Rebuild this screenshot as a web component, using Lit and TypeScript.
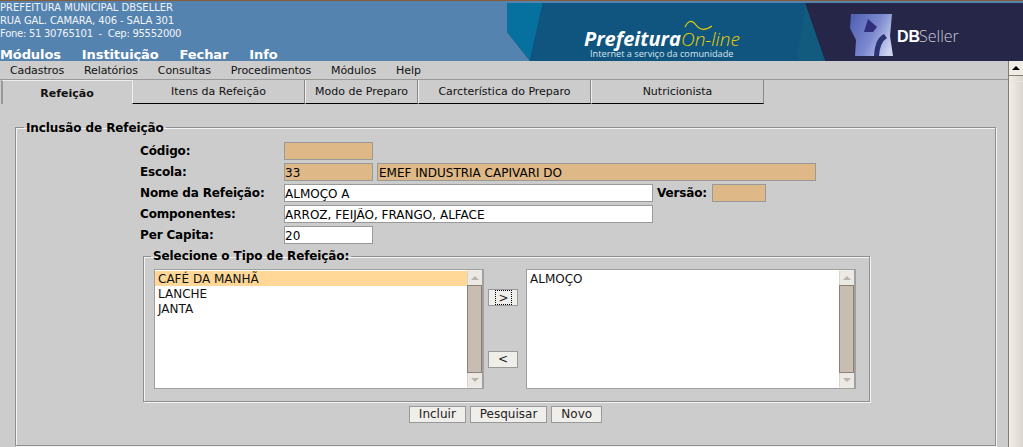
import { LitElement, css, html, svg } from 'lit'
import { customElement } from 'lit/decorators.js'

const topMenu = ['Módulos', 'Instituição', 'Fechar', 'Info']
const subMenu = ['Cadastros', 'Relatórios', 'Consultas', 'Procedimentos', 'Módulos', 'Help']
const tabs = [
  { label: 'Itens da Refeição', width: 173 },
  { label: 'Modo de Preparo', width: 113 },
  { label: 'Carcterística do Preparo', width: 173 },
  { label: 'Nutricionista', width: 173 },
]

const banner = svg`
  <svg class="banner" width="516" height="61" viewBox="507 0 516 61">
    <defs>
      <linearGradient id="cube" x1="0" y1="0.2" x2="1" y2="0.7">
        <stop offset="0" stop-color="#5362b4" />
        <stop offset="0.55" stop-color="#7d8ad0" />
        <stop offset="1" stop-color="#ccd4f0" />
      </linearGradient>
    </defs>
    <rect x="507" y="0" width="329" height="3" fill="#5583b0" />
    <rect x="507" y="3" width="516" height="58" fill="#252648" />
    <polygon points="507,3 543,3 530,61 507,32" fill="#06709f" />
    <polygon points="543,3 805,3 825,61 530,61" fill="#10557f" />
    <polygon points="805,3 825,61 797,61" fill="#125b7e" />
    <path d="M507 32 L530 61 L507 61Z" fill="#5583b0" />
    <path d="M851 14 L892 14 L890 36 L893 56 L855 56 L856 40 L850 28Z" fill="url(#cube)" />
    <path d="M864 32 L868 19 L877 27 L873 32Z" fill="#2e2f78" />
    <path d="M874 56 Q875 38 884 34 L887 38 Q880 42 879 56Z" fill="#2c3372" />
    <text x="584" y="46" class="pref">Prefeitura</text>
    <text x="681" y="46" class="online">On-line</text>
    <path d="M685 27 Q690 17 696 25 T712 26" fill="none" stroke="#e8d000" stroke-width="1.2" />
    <text x="590" y="57" class="tag">Internet a serviço da comunidade</text>
    <text x="897" y="42" class="db">DB</text>
    <text x="919" y="42" class="seller">Seller</text>
  </svg>
`

const arrow = (up: boolean) => html`<i class="tri ${up ? 'up' : 'down'}"></i>`

@customElement('app-root')
export class AppRoot extends LitElement {
  private list(items: string[], selected: number) {
    return html`
      <div class="list">
        <div class="options">
          ${items.map((t, i) => html`<div class="option ${i === selected ? 'sel' : ''}">${t}</div>`)}
        </div>
        <div class="sbar">
          <div class="sbtn">${arrow(true)}</div>
          <div class="sthumb"></div>
          <div class="sbtn">${arrow(false)}</div>
        </div>
      </div>
    `
  }

  protected render() {
    return html`
      <header class="head">
        <div class="brand">
          <div class="addr">
            <div>PREFEITURA MUNICIPAL DBSELLER</div>
            <div class="tight">RUA GAL. CAMARA, 406 - SALA 301</div>
            <div class="tighter">Fone: 51 30765101 &nbsp;-&nbsp; Cep: 95552000</div>
          </div>
          <nav class="top">${topMenu.map((m) => html`<span>${m}</span>`)}</nav>
        </div>
        ${banner}
      </header>
      <div class="page">
        <main class="main">
          <nav class="menu">${subMenu.map((m) => html`<span>${m}</span>`)}</nav>
          <div class="tabs">
            <div class="tab active">Refeição</div>
            ${tabs.map((t) => html`<div class="tab" style="width:${t.width}px">${t.label}</div>`)}
          </div>
          <fieldset class="outer">
            <legend>Inclusão de Refeição</legend>
            <div class="form">
              <label>Código:</label>
              <div class="row"><input class="ro short" readonly /></div>
              <label>Escola:</label>
              <div class="row">
                <input class="ro short" readonly value="33" />
                <input class="ro desc" readonly value="EMEF INDUSTRIA CAPIVARI DO" />
              </div>
              <label>Nome da Refeição:</label>
              <div class="row">
                <input class="wide" value="ALMOÇO A" />
                <label class="versao">Versão:</label>
                <input class="ro ver" readonly />
              </div>
              <label>Componentes:</label>
              <div class="row"><input class="wide" value="ARROZ, FEIJÃO, FRANGO, ALFACE" /></div>
              <label>Per Capita:</label>
              <div class="row"><input class="short" value="20" /></div>
            </div>
            <fieldset class="inner">
              <legend>Selecione o Tipo de Refeição:</legend>
              <div class="pick">
                ${this.list(['CAFÉ DA MANHÃ', 'LANCHE', 'JANTA'], 0)}
                <div class="moves">
                  <button class="move"><span class="focus">&gt;</span></button>
                  <button class="move">&lt;</button>
                </div>
                ${this.list(['ALMOÇO'], -1)}
              </div>
            </fieldset>
            <div class="actions">
              <button>Incluir</button>
              <button>Pesquisar</button>
              <button>Novo</button>
            </div>
          </fieldset>
        </main>
        <aside class="pagebar">
          <div class="pagebtn">${arrow(true)}</div>
          <div class="pagethumb"></div>
        </aside>
      </div>
    `
  }

  static styles = css`
    :host {
      display: block;
      width: 1023px;
      height: 447px;
      overflow: hidden;
      background: #cccccc;
      font-family: 'DejaVu Sans', sans-serif;
      font-size: 12px;
      color: #000;
    }

    * {
      box-sizing: border-box;
    }

    .head {
      display: flex;
      height: 61px;
      background: #5583b0;
      border-top: 1px solid #8a5c36;
      overflow: hidden;
    }

    .brand {
      width: 507px;
      display: flex;
      flex-direction: column;
      color: #fff;
    }

    .addr {
      font-size: 10px;
      line-height: 13px;
      color: #f0f4f8;
    }

    .tight {
      letter-spacing: -0.1px;
    }

    .tighter {
      letter-spacing: -0.27px;
    }

    .top {
      display: flex;
      gap: 21px;
      margin-top: 7px;
      font-size: 13px;
      font-weight: bold;
      line-height: 15px;
      letter-spacing: -0.1px;
    }

    .banner {
      display: block;
      flex: none;
      margin-top: -1px;
    }

    .pref {
      font: italic bold 20px 'Open Sans', sans-serif;
      fill: #fff;
    }

    .online {
      font: italic 300 19px 'Open Sans', sans-serif;
      fill: #e8d000;
    }

    .tag {
      font: 9.2px 'Open Sans', sans-serif;
      fill: #d8e4ec;
    }

    .db {
      font: bold 16px 'Liberation Sans', sans-serif;
      fill: #fff;
    }

    .seller {
      font: 300 16px 'Open Sans', sans-serif;
      fill: #c8cbd8;
    }

    .page {
      display: flex;
      height: 386px;
    }

    .main {
      flex: 1;
      min-width: 0;
    }

    .menu {
      display: flex;
      gap: 20px;
      height: 19px;
      padding-left: 10px;
      font-size: 11px;
      line-height: 19px;
      letter-spacing: -0.1px;
      color: #111;
      border-bottom: 1px solid #999;
    }

    .tabs {
      display: flex;
      height: 24px;
      padding-left: 1px;
    }

    .tab {
      height: 24px;
      text-align: center;
      font-size: 11px;
      line-height: 23px;
      color: #111;
      border-left: 1px solid #eee;
      border-right: 1px solid #888;
      border-bottom: 1px solid #000;
    }

    .tab.active {
      width: 131px;
      font-weight: bold;
      line-height: 26px;
      border-left: 2px solid #999;
      border-right: 1px solid #ccc;
      border-bottom: 0;
      border-top: 1px solid #eee;
    }

    fieldset {
      margin: 0;
      padding: 0;
      border: 1px solid #8e8e8e;
      box-shadow:
        1px 1px 0 #f4f4f4,
        inset 1px 1px 0 #f4f4f4;
    }

    legend {
      font-weight: bold;
      padding: 0 2px;
      line-height: 14px;
      letter-spacing: -0.1px;
    }

    .outer {
      width: 981px;
      height: 327px;
      margin: 15px 0 0 15px;
    }

    .outer > legend {
      margin-left: 8px;
      padding-top: 2px;
    }

    .form {
      display: grid;
      grid-template-columns: 144px 1fr;
      grid-auto-rows: 18px;
      row-gap: 3px;
      padding-left: 124px;
      margin-top: 7px;
    }

    label {
      font-weight: bold;
      line-height: 18px;
      letter-spacing: -0.15px;
    }

    .row {
      display: flex;
      gap: 4px;
    }

    input {
      height: 18px;
      margin: 0;
      padding: 2px 0 0;
      border: 1px solid #999;
      border-radius: 0;
      outline: none;
      background: #fff;
      font: 12px 'DejaVu Sans', sans-serif;
      color: #000;
    }

    input.ro {
      background: #deb887;
    }

    input.desc {
      width: 439px;
      padding: 2px 1px 0;
    }

    .short {
      width: 89px;
    }

    .wide {
      width: 369px;
    }

    .versao {
      width: 51px;
    }

    .ver {
      width: 54px;
    }

    .inner {
      width: 727px;
      height: 153px;
      margin: 5px 0 0 127px;
    }

    .inner > legend {
      margin-left: 7px;
    }

    .pick {
      display: flex;
      padding: 6px 0 0 10px;
    }

    .list {
      display: flex;
      width: 330px;
      height: 120px;
      background: #fff;
      border: 2px solid #a0a0a0;
      border-width: 1px 2px 1px 1px;
    }

    .options {
      flex: 1;
      padding-top: 1px;
    }

    .option {
      height: 15px;
      padding-left: 3px;
      line-height: 17px;
      color: #111;
    }

    .option.sel {
      background: #ffd797;
    }

    .sbar {
      width: 15px;
      display: flex;
      flex-direction: column;
      padding: 1px 0;
      background: #f0ece6;
    }

    .sbtn {
      height: 14px;
      display: flex;
      align-items: center;
      justify-content: center;
      background: #ece8e3;
      border-left: 1px solid #d8d3cc;
    }

    .sthumb {
      flex: 1;
      background: #c7bdb2;
      border: 1px solid #8a8075;
    }

    .tri {
      width: 0;
      height: 0;
      border-left: 4px solid transparent;
      border-right: 4px solid transparent;
    }

    .tri.up {
      border-bottom: 4px solid #b8b4ae;
    }

    .tri.down {
      border-top: 4px solid #b8b4ae;
    }

    .moves {
      width: 42px;
      padding: 20px 0 0 4px;
      display: flex;
      flex-direction: column;
      gap: 45px;
    }

    button {
      height: 17px;
      margin: 0;
      padding: 0;
      border: 1px solid #999;
      border-radius: 0;
      background: #f0eeea;
      font: 12px 'DejaVu Sans', sans-serif;
      line-height: 15px;
      color: #222;
    }

    .move {
      width: 30px;
      height: 17px;
    }

    .focus {
      display: block;
      margin: 0 1px 0 6px;
      width: 17px;
      height: 15px;
      border: 1px dotted #000;
      line-height: 15px;
    }

    .actions {
      display: flex;
      justify-content: center;
      gap: 4px;
      margin-top: 4px;
    }

    .actions button {
      padding: 0 9px;
    }

    .pagebar {
      width: 15px;
      flex: none;
      display: flex;
      flex-direction: column;
      border-left: 1px solid #857a70;
      background: linear-gradient(90deg, #f2eeea, #dcd5cd);
    }

    .pagebtn {
      height: 15px;
      display: flex;
      align-items: center;
      justify-content: center;
      background: #f0ece6;
      border-bottom: 1px solid #857a70;
    }

    .pagebtn .tri.up {
      border-bottom-color: #000;
    }

    .pagethumb {
      flex: 1;
      margin-top: 5px;
      border-top: 1px solid #e8e4de;
    }
  `
}

declare global {
  interface HTMLElementTagNameMap {
    'app-root': AppRoot
  }
}
